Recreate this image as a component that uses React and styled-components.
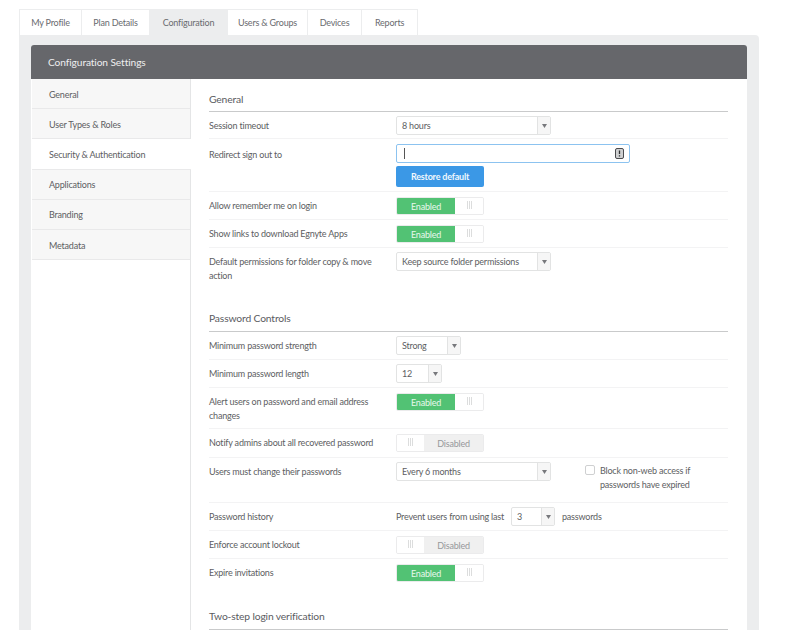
import React from "react";
import styled, { createGlobalStyle } from "styled-components";

const GlobalStyle = createGlobalStyle`
  html, body {
    margin: 0;
    padding: 0;
    background: #fff;
    height: 630px;
    overflow: hidden;
  }
  body {
    font-family: "Lato", "Open Sans", sans-serif;
    font-size: 9px;
    letter-spacing: -0.2px;
    color: #55565a;
  }
`;

const tabs = ["My Profile", "Plan Details", "Configuration", "Users & Groups", "Devices", "Reports"];
const tabWidths = [63, 68, 78, 80, 54, 56];
const sideItems = ["General", "User Types & Roles", "Security & Authentication", "Applications", "Branding", "Metadata"];

const Caret = () => (
  <svg width="5" height="4" viewBox="0 0 5 4">
    <path d="M0 0h5L2.5 4z" fill="#77787c" />
  </svg>
);

const Select = ({ width, value }) => (
  <SelectBox $width={width}>
    <SelectValue>{value}</SelectValue>
    <SelectArrow>
      <Caret />
    </SelectArrow>
  </SelectBox>
);

const Toggle = ({ on }) =>
  on ? (
    <ToggleBox>
      <ToggleLabel $on>Enabled</ToggleLabel>
      <ToggleKnob $w={28}>
        <Grip />
      </ToggleKnob>
    </ToggleBox>
  ) : (
    <ToggleBox>
      <ToggleKnob $w={27}>
        <Grip />
      </ToggleKnob>
      <ToggleLabel>Disabled</ToggleLabel>
    </ToggleBox>
  );

const App = () => {
  return (
    <Page>
      <GlobalStyle />
      <TabBar>
        {tabs.map((t, i) => (
          <Tab key={t} $width={tabWidths[i]} $active={t === "Configuration"}>
            {t}
          </Tab>
        ))}
      </TabBar>
      <Panel>
        <Card>
          <CardHeader>Configuration Settings</CardHeader>
          <CardBody>
            <Sidebar>
              {sideItems.map((s) => (
                <SideItem key={s} $active={s === "Security & Authentication"}>
                  {s}
                </SideItem>
              ))}
            </Sidebar>
            <Content>
              <SectionTitle>General</SectionTitle>
              <Row $h={27}>
                <Label>Session timeout</Label>
                <Select width={155} value="8 hours" />
              </Row>
              <Row $h={53}>
                <Label $low>Redirect sign out to</Label>
                <Stack>
                  <TextInput>
                    <Cursor />
                    <svg width="9" height="11" viewBox="0 0 9 11">
                      <rect x="0.5" y="0.5" width="8" height="10" rx="1.5" fill="#cfd0d1" stroke="#4a4b4e" />
                      <path d="M4.5 2.5v3.5M4.5 7.2v1.3" stroke="#2f3033" strokeWidth="1.3" />
                    </svg>
                  </TextInput>
                  <BlueButton>Restore default</BlueButton>
                </Stack>
              </Row>
              <Row $h={28}>
                <Label>Allow remember me on login</Label>
                <Toggle on />
              </Row>
              <Row $h={28}>
                <Label>Show links to download Egnyte Apps</Label>
                <Toggle on />
              </Row>
              <Row $h={42} $plain>
                <Label>Default permissions for folder copy &amp; move action</Label>
                <Select width={155} value="Keep source folder permissions" />
              </Row>

              <SectionTitle $gap>Password Controls</SectionTitle>
              <Row $h={28}>
                <Label>Minimum password strength</Label>
                <Select width={65} value="Strong" />
              </Row>
              <Row $h={28}>
                <Label>Minimum password length</Label>
                <Select width={46} value="12" />
              </Row>
              <Row $h={41}>
                <Label>Alert users on password and email address changes</Label>
                <Toggle on />
              </Row>
              <Row $h={29}>
                <Label>Notify admins about all recovered password</Label>
                <Toggle />
              </Row>
              <Row $h={45}>
                <Label>Users must change their passwords</Label>
                <Select width={155} value="Every 6 months" />
                <CheckGroup>
                  <Checkbox />
                  <CheckText>Block non-web access if passwords have expired</CheckText>
                </CheckGroup>
              </Row>
              <Row $h={28}>
                <Label>Password history</Label>
                <Inline>
                  Prevent users from using last
                  <Select width={44} value="3" />
                  passwords
                </Inline>
              </Row>
              <Row $h={28}>
                <Label>Enforce account lockout</Label>
                <Toggle />
              </Row>
              <Row $h={29} $plain>
                <Label>Expire invitations</Label>
                <Toggle on />
              </Row>

              <SectionTitle $gap>Two-step login verification</SectionTitle>
            </Content>
          </CardBody>
        </Card>
      </Panel>
    </Page>
  );
};

export default App;

const Page = styled.div`
  padding: 9px 0 0 19px;
  width: 740px;
  height: 621px;
  overflow: hidden;
`;

const TabBar = styled.div`
  display: flex;
  height: 26px;
`;

const Tab = styled.div`
  width: ${(p) => p.$width}px;
  box-sizing: border-box;
  display: flex;
  align-items: center;
  justify-content: center;
  color: #6a6b6f;
  background: ${(p) => (p.$active ? "#ecedee" : "#fff")};
  border: 1px solid #ecedee;
  border-bottom: 0;
  border-left-width: 0;
  &:first-child {
    border-left-width: 1px;
  }
`;

const Panel = styled.div`
  background: #ecedee;
  border-top-right-radius: 4px;
  padding: 10px 12px 0;
  height: 600px;
`;

const Card = styled.div`
  background: #fff;
  border-top-left-radius: 3px;
  border-top-right-radius: 3px;
  height: 590px;
  overflow: hidden;
`;

const CardHeader = styled.div`
  height: 34px;
  background: #66676b;
  color: #eeeeef;
  font-size: 10.2px;
  letter-spacing: -0.1px;
  line-height: 35px;
  padding-left: 17px;
`;

const CardBody = styled.div`
  display: flex;
  height: 556px;
`;

const Sidebar = styled.div`
  width: 160px;
  box-sizing: border-box;
  flex: none;
  border-right: 1px solid #e4e5e6;
`;

const SideItem = styled.div`
  height: 30.2px;
  box-sizing: border-box;
  padding: 1px 0 0 17px;
  display: flex;
  align-items: center;
  color: #5d5e62;
  background: ${(p) => (p.$active ? "#fff" : "#f7f7f7")};
  border-bottom: 1px solid #e9e9ea;
  margin-right: ${(p) => (p.$active ? "-1px" : "0")};
  margin-left: 1px;
  position: relative;
`;

const Content = styled.div`
  width: 519px;
  margin-left: 18px;
`;

const SectionTitle = styled.div`
  height: ${(p) => (p.$gap ? "35px" : "33px")};
  box-sizing: border-box;
  font-size: 10.3px;
  letter-spacing: -0.15px;
  color: #5a5b5f;
  line-height: ${(p) => (p.$gap ? "42px" : "40px")};
  border-bottom: 1px solid #c9cacb;
  margin-top: ${(p) => (p.$gap ? "7px" : "0")};
`;

const Row = styled.div`
  height: ${(p) => p.$h}px;
  box-sizing: border-box;
  display: flex;
  align-items: flex-start;
  padding-top: 4px;
  border-bottom: ${(p) => (p.$plain ? "0" : "1px solid #f3f3f4")};
`;

const Label = styled.div`
  width: 187px;
  flex: none;
  line-height: 13.5px;
  padding: ${(p) => (p.$low ? "5px" : "3px")} 15px 0 0;
  box-sizing: border-box;
  color: #5d5e62;
`;

const SelectBox = styled.div`
  width: ${(p) => p.$width}px;
  height: 19px;
  box-sizing: border-box;
  flex: none;
  display: flex;
  border: 1px solid #e2e3e3;
  border-radius: 2px;
  background: #fff;
`;

const SelectValue = styled.div`
  flex: 1;
  padding-left: 5px;
  line-height: 17px;
  color: #5d5e62;
  white-space: nowrap;
  overflow: hidden;
`;

const SelectArrow = styled.div`
  width: 12px;
  flex: none;
  display: flex;
  align-items: center;
  justify-content: center;
  background: #f6f6f6;
  border-left: 1px solid #e2e3e3;
`;

const ToggleBox = styled.div`
  width: 88px;
  height: 18px;
  margin-top: 1px;
  box-sizing: border-box;
  display: flex;
  border: 1px solid #ebebec;
  border-radius: 2px;
  overflow: hidden;
`;

const ToggleLabel = styled.div`
  flex: 1;
  display: flex;
  align-items: center;
  justify-content: center;
  background: ${(p) => (p.$on ? "#52c274" : "#f0f0f0")};
  color: ${(p) => (p.$on ? "#e8f8ec" : "#97989b")};
`;

const ToggleKnob = styled.div`
  width: ${(p) => p.$w}px;
  flex: none;
  display: flex;
  justify-content: center;
  padding-top: 3px;
  box-sizing: border-box;
  background: #fff;
`;

const Grip = styled.div`
  width: 5px;
  height: 8px;
  box-sizing: border-box;
  border-left: 1px solid #dcdddd;
  border-right: 1px solid #dcdddd;
  background: linear-gradient(#dcdddd, #dcdddd) center / 1px 100% no-repeat;
`;

const Stack = styled.div`
  display: flex;
  flex-direction: column;
  gap: 3px;
  margin-top: 1px;
`;

const TextInput = styled.div`
  width: 234px;
  height: 19px;
  box-sizing: border-box;
  display: flex;
  align-items: center;
  justify-content: space-between;
  padding: 0 5px 0 7px;
  border: 1px solid #8cc3f0;
  border-radius: 2px;
`;

const Cursor = styled.div`
  width: 1px;
  height: 11px;
  background: #555;
`;

const BlueButton = styled.div`
  width: 88px;
  height: 21px;
  display: flex;
  align-items: center;
  justify-content: center;
  background: #3b98e6;
  border-radius: 2px;
  color: #f0f7fd;
  font-weight: 700;
`;

const CheckGroup = styled.div`
  display: flex;
  margin-left: 34px;
  margin-top: 2px;
  gap: 5px;
`;

const Checkbox = styled.div`
  width: 10px;
  height: 10px;
  box-sizing: border-box;
  border: 1px solid #cfd0d1;
  border-radius: 2px;
  margin-top: 1px;
`;

const CheckText = styled.div`
  width: 100px;
  line-height: 13.5px;
  color: #5d5e62;
`;

const Inline = styled.div`
  display: flex;
  align-items: center;
  gap: 7px;
  color: #5d5e62;
`;
